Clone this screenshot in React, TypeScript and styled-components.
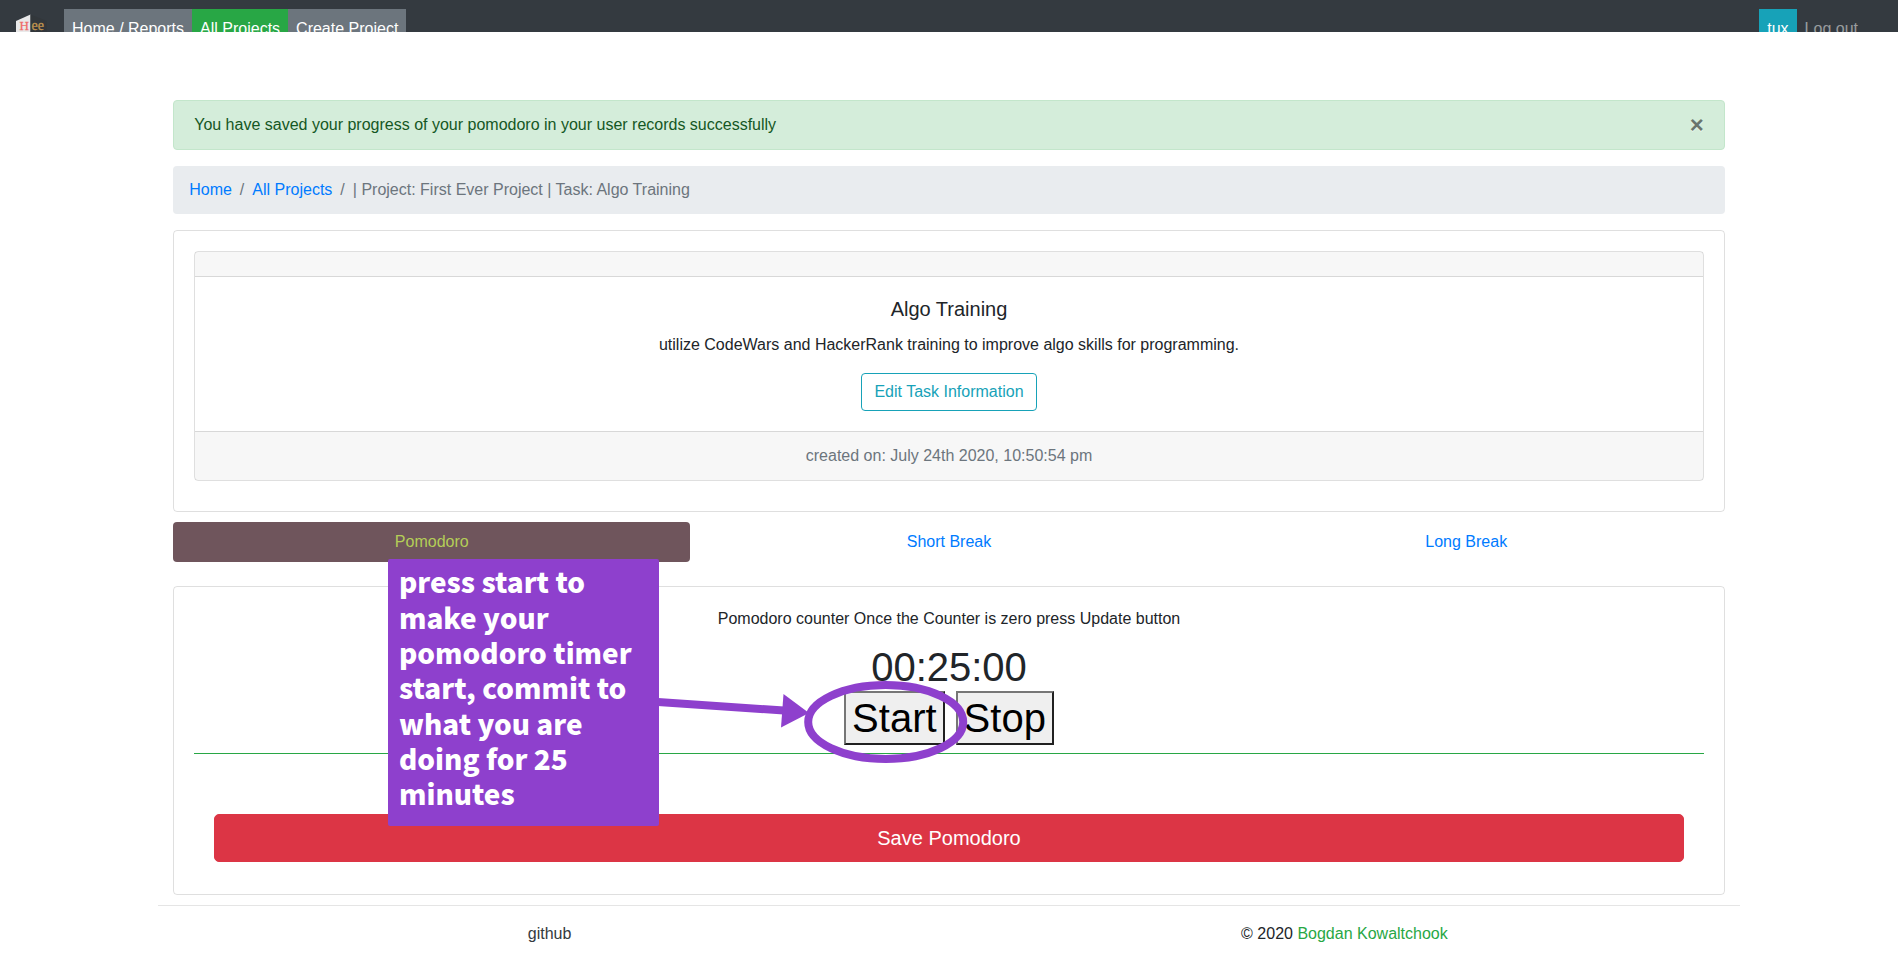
import React from 'react';
import styled, { createGlobalStyle } from 'styled-components';

const Global = createGlobalStyle`
  *, *::before, *::after { box-sizing: border-box; }
  body {
    margin: 0;
    background: #fff;
    color: #212529;
    font: 400 16px/1.5 "Liberation Sans", Arial, sans-serif;
  }
  a { color: #007bff; text-decoration: none; }
`;

const Page = styled.div`
  position: relative;
  height: 962px;
  overflow: hidden;
`;

const NavBar = styled.nav`
  display: flex;
  align-items: flex-start;
  height: 32px;
  padding: 9px 32px 0 16px;
  overflow: hidden;
  background: #343a40;
`;

const Brand = styled.a`
  display: block;
  width: 32px;
  height: 32px;
  margin: 3px 16px 0 0;
`;

const NavLink = styled.a<{ $bg?: string; $color?: string }>`
  height: 40px;
  padding: 8px;
  white-space: nowrap;
  color: ${p => p.$color ?? '#fff'};
  background: ${p => p.$bg ?? 'transparent'};
`;

const NavRight = styled.div`
  display: flex;
  margin-left: auto;
`;

const Content = styled.main`
  width: 83.3333%;
  margin: 68px auto 0;
  padding: 0 15px;
`;

const Alert = styled.div`
  display: flex;
  justify-content: space-between;
  padding: 12px 20px;
  margin-bottom: 16px;
  color: #155724;
  background: #d4edda;
  border: 1px solid #c3e6cb;
  border-radius: 4px;
`;

const CloseButton = styled.button`
  padding: 0;
  border: 0;
  background: none;
  color: #000;
  opacity: 0.5;
  font: 700 24px/24px "Liberation Sans", Arial, sans-serif;
  text-shadow: 0 1px 0 #fff;
`;

const Breadcrumb = styled.ol`
  display: flex;
  list-style: none;
  margin: 0 0 16px;
  padding: 12px 16px;
  background: #e9ecef;
  border-radius: 4px;
`;

const Crumb = styled.li`
  color: #6c757d;
  & + & { padding-left: 8px; }
  & + &::before { content: '/'; padding-right: 8px; }
`;

const Card = styled.section`
  border: 1px solid rgba(0, 0, 0, 0.125);
  border-radius: 4px;
  text-align: center;
`;

const TaskPanel = styled(Card)`
  padding: 20px 20px 30px;
`;

const CardHeader = styled.div`
  height: 25px;
  background: rgba(0, 0, 0, 0.03);
  border-bottom: 1px solid rgba(0, 0, 0, 0.125);
`;

const CardBody = styled.div`
  padding: 20px;
`;

const CardTitle = styled.h5`
  margin: 0 0 12px;
  font-size: 20px;
  font-weight: 500;
  line-height: 24px;
`;

const CardText = styled.p`
  margin: 0 0 16px;
`;

const OutlineButton = styled.a`
  display: inline-block;
  vertical-align: top;
  padding: 6px 12px;
  border: 1px solid #17a2b8;
  border-radius: 4px;
  color: #17a2b8;
`;

const CardFooter = styled.div`
  padding: 12px 20px;
  color: #6c757d;
  background: rgba(0, 0, 0, 0.03);
  border-top: 1px solid rgba(0, 0, 0, 0.125);
`;

const Tabs = styled.nav`
  display: grid;
  grid-template-columns: repeat(3, 1fr);
  margin: 10px 0 24px;
  text-align: center;
`;

const Tab = styled.a<{ $active?: boolean }>`
  padding: 8px 16px;
  border-radius: 4px;
  color: ${p => (p.$active ? '#b4ce57' : '#007bff')};
  background: ${p => (p.$active ? '#6f555c' : 'transparent')};
`;

const TimerPanel = styled(Card)`
  padding: 20px 20px 32px;
`;

const TimerNote = styled.p`
  margin: 0 0 12px;
`;

const Clock = styled.div`
  font-size: 40px;
  line-height: 48px;
`;

const TimerButtons = styled.div`
  display: flex;
  justify-content: center;
  gap: 11px;
`;

const TimerButton = styled.button`
  padding: 1px 6px;
  border: 2px solid;
  border-color: #767676 #212121 #212121 #767676;
  border-radius: 0;
  background: #efefef;
  color: #000;
  font: 40px/48px "Liberation Sans", Arial, sans-serif;
`;

const GreenRule = styled.hr`
  height: 1px;
  margin: 8px 0 60px;
  border: 0;
  background: #28a745;
`;

const SaveRow = styled.div`
  padding: 0 20px;
`;

const SaveButton = styled.button`
  display: block;
  width: 100%;
  padding: 8px 16px;
  border: 1px solid #dc3545;
  border-radius: 5px;
  background: #dc3545;
  color: #fff;
  font: 20px/30px "Liberation Sans", Arial, sans-serif;
`;

const Footer = styled.footer`
  display: grid;
  grid-template-columns: 1fr 1fr;
  width: 83.3333%;
  margin: 10px auto 0;
  padding-top: 16px;
  border-top: 1px solid rgba(0, 0, 0, 0.1);
  text-align: center;
`;

const FooterCell = styled.div<{ $inset?: number }>`
  padding-right: ${p => p.$inset ?? 0}px;
`;

const RepoLink = styled.a`
  color: #343a40;
`;

const Author = styled.a`
  color: #28a745;
`;

const Callout = styled.aside`
  position: absolute;
  left: 388.4px;
  top: 559.4px;
  width: 270.2px;
  height: 266.3px;
  padding: 5px 10.6px;
  border-radius: 2px;
  background: #8e40cd;
  color: #fff;
  font: 900 27.9px/35.28px "Noto Sans CJK SC", sans-serif;
  white-space: pre;
`;

const Pointer = styled.svg`
  position: absolute;
  left: 650px;
  top: 670px;
`;

const Logo = () => (
  <svg width="32" height="32" viewBox="0 0 32 32">
    <path d="M0 9 14.5 2.5V32H0Z" fill="#e9e9ea" />
    <path d="M14.5 2.5 31 9V32H14.5Z" fill="#32373b" />
    <text x="3.5" y="18" fontFamily="Liberation Serif" fontSize="13" fill="#ef6a68" stroke="#ef6a68" strokeWidth="0.3">H</text>
    <text x="15.5" y="18" fontFamily="Liberation Serif" fontSize="14" fill="#c0954f" stroke="#c0954f" strokeWidth="0.3">ee</text>
  </svg>
);

export default function App() {
  return (
    <Page>
      <Global />
      <NavBar>
        <Brand href="#"><Logo /></Brand>
        <NavLink href="#" $bg="#6c757d">Home / Reports</NavLink>
        <NavLink href="#" $bg="#28a745">All Projects</NavLink>
        <NavLink href="#" $bg="#6c757d">Create Project</NavLink>
        <NavRight>
          <NavLink href="#" $bg="#17a2b8">tux</NavLink>
          <NavLink href="#" $color="rgba(255,255,255,.5)">Log out</NavLink>
        </NavRight>
      </NavBar>
      <Content>
        <Alert>
          You have saved your progress of your pomodoro in your user records successfully
          <CloseButton>×</CloseButton>
        </Alert>
        <Breadcrumb>
          <Crumb><a href="#">Home</a></Crumb>
          <Crumb><a href="#">All Projects</a></Crumb>
          <Crumb>| Project: First Ever Project | Task: Algo Training</Crumb>
        </Breadcrumb>
        <TaskPanel>
          <Card>
            <CardHeader />
            <CardBody>
              <CardTitle>Algo Training</CardTitle>
              <CardText>utilize CodeWars and HackerRank training to improve algo skills for programming.</CardText>
              <OutlineButton href="#">Edit Task Information</OutlineButton>
            </CardBody>
            <CardFooter>created on: July 24th 2020, 10:50:54 pm</CardFooter>
          </Card>
        </TaskPanel>
        <Tabs>
          <Tab href="#" $active>Pomodoro</Tab>
          <Tab href="#">Short Break</Tab>
          <Tab href="#">Long Break</Tab>
        </Tabs>
        <TimerPanel>
          <TimerNote>Pomodoro counter Once the Counter is zero press Update button</TimerNote>
          <Clock>00:25:00</Clock>
          <TimerButtons>
            <TimerButton>Start</TimerButton>
            <TimerButton>Stop</TimerButton>
          </TimerButtons>
          <GreenRule />
          <SaveRow><SaveButton>Save Pomodoro</SaveButton></SaveRow>
        </TimerPanel>
      </Content>
      <Footer>
        <FooterCell $inset={8}><RepoLink href="#">github</RepoLink></FooterCell>
        <FooterCell>© 2020 <Author href="#">Bogdan Kowaltchook</Author></FooterCell>
      </Footer>
      <Callout>{`press start to
make your
pomodoro timer
start, commit to
what you are
doing for 25
minutes`}</Callout>
      <Pointer width="330" height="100" viewBox="0 0 330 100">
        <path d="M8 32 134 40.5" stroke="#8e40cd" strokeWidth="8" />
        <path d="M133.5 24 159 43 131 57.5Z" fill="#8e40cd" />
        <ellipse cx="235.7" cy="52" rx="77.5" ry="37" fill="none" stroke="#8e40cd" strokeWidth="8" />
      </Pointer>
    </Page>
  );
}
